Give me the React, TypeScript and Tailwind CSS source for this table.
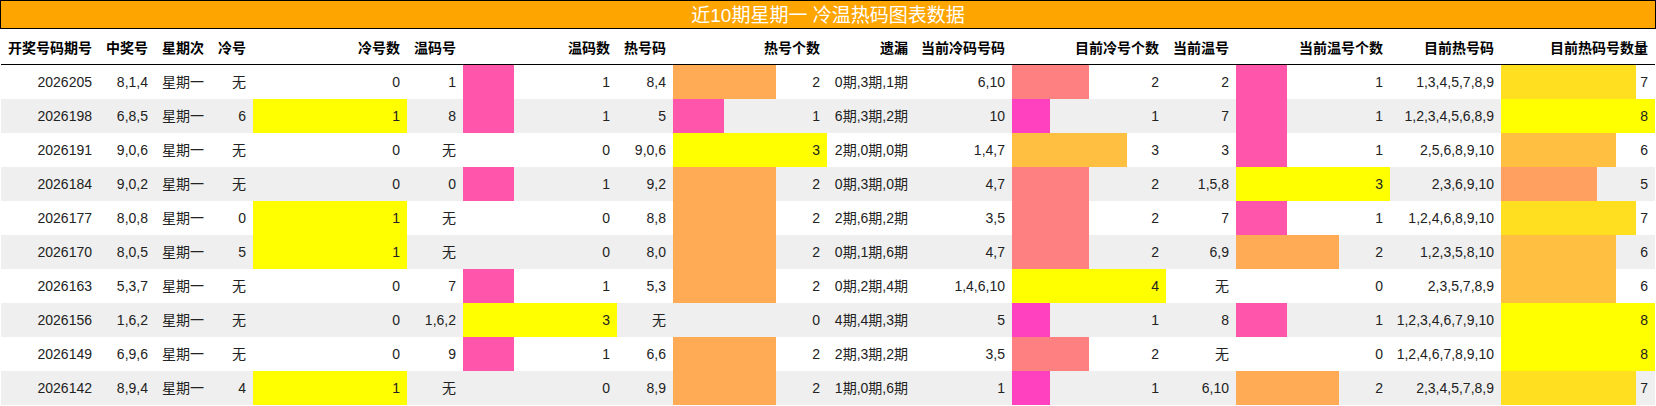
const COLS =
  "grid grid-cols-[98px_56px_56px_42px_154px_56px_154px_56px_154px_88px_97px_154px_70px_154px_111px_154px]";

const HEADERS = [
  "开奖号码期号",
  "中奖号",
  "星期次",
  "冷号",
  "冷号数",
  "温码号",
  "温码数",
  "热号码",
  "热号个数",
  "遗漏",
  "当前冷码号码",
  "目前冷号个数",
  "当前温号",
  "当前温号个数",
  "目前热号码",
  "目前热码号数量",
];

// columns that carry a data bar
const BAR_COLS = [4, 6, 8, 11, 13, 15];

const ROWS: string[][] = [
  ["2026205", "8,1,4", "星期一", "无", "0", "1", "1", "8,4", "2", "0期,3期,1期", "6,10", "2", "2", "1", "1,3,4,5,7,8,9", "7"],
  ["2026198", "6,8,5", "星期一", "6", "1", "8", "1", "5", "1", "6期,3期,2期", "10", "1", "7", "1", "1,2,3,4,5,6,8,9", "8"],
  ["2026191", "9,0,6", "星期一", "无", "0", "无", "0", "9,0,6", "3", "2期,0期,0期", "1,4,7", "3", "3", "1", "2,5,6,8,9,10", "6"],
  ["2026184", "9,0,2", "星期一", "无", "0", "0", "1", "9,2", "2", "0期,3期,0期", "4,7", "2", "1,5,8", "3", "2,3,6,9,10", "5"],
  ["2026177", "8,0,8", "星期一", "0", "1", "无", "0", "8,8", "2", "2期,6期,2期", "3,5", "2", "7", "1", "1,2,4,6,8,9,10", "7"],
  ["2026170", "8,0,5", "星期一", "5", "1", "无", "0", "8,0", "2", "0期,1期,6期", "4,7", "2", "6,9", "2", "1,2,3,5,8,10", "6"],
  ["2026163", "5,3,7", "星期一", "无", "0", "7", "1", "5,3", "2", "0期,2期,4期", "1,4,6,10", "4", "无", "0", "2,3,5,7,8,9", "6"],
  ["2026156", "1,6,2", "星期一", "无", "0", "1,6,2", "3", "无", "0", "4期,4期,3期", "5", "1", "8", "1", "1,2,3,4,6,7,9,10", "8"],
  ["2026149", "6,9,6", "星期一", "无", "0", "9", "1", "6,6", "2", "2期,3期,2期", "3,5", "2", "无", "0", "1,2,4,6,7,8,9,10", "8"],
  ["2026142", "8,9,4", "星期一", "4", "1", "无", "0", "8,9", "2", "1期,0期,6期", "1", "1", "6,10", "2", "2,3,4,5,7,8,9", "7"],
];

const colMax = (c: number) => Math.max(...ROWS.map((r) => Number(r[c])));

function barStyle(value: number, max: number) {
  if (!value || !max) return undefined;
  const t = value / max;
  const g = Math.round(255 * t);
  const b = Math.round(255 * (1 - t));
  const pct = (t * 100).toFixed(3);
  const color = `rgb(255,${g},${b})`;
  return {
    backgroundImage: `linear-gradient(to right, ${color} 0, ${color} ${pct}%, transparent ${pct}%)`,
  };
}

export default function App() {
  const maxes: Record<number, number> = {};
  BAR_COLS.forEach((c) => (maxes[c] = colMax(c)));

  return (
    <div className="w-[1656px] h-[406px] bg-white font-['Liberation_Sans','Noto_Sans_CJK_SC',sans-serif] text-[14px] text-[#222]">
      {/* Title */}
      <div className="flex h-[29px] items-center justify-center border border-black bg-[#ffa500] pt-[2px] text-[19px] leading-none text-white">
        近10期星期一 冷温热码图表数据
      </div>

      <div className="px-px">
        {/* Header */}
        <div className={`${COLS} h-[36px] border-b border-black pt-[3px] font-bold text-black`}>
          {HEADERS.map((h) => (
            <div key={h} className="flex items-center justify-end px-[7px] whitespace-nowrap">
              {h}
            </div>
          ))}
        </div>

        {/* Rows */}
        {ROWS.map((row, i) => (
          <div key={row[0]} className={`${COLS} h-[34px] ${i % 2 === 1 ? "bg-[#efefef]" : "bg-white"}`}>
            {row.map((cell, c) => (
              <div
                key={c}
                className="flex items-center justify-end px-[7px] whitespace-nowrap"
                style={BAR_COLS.includes(c) ? barStyle(Number(cell), maxes[c]) : undefined}
              >
                {cell}
              </div>
            ))}
          </div>
        ))}
      </div>
    </div>
  );
}
